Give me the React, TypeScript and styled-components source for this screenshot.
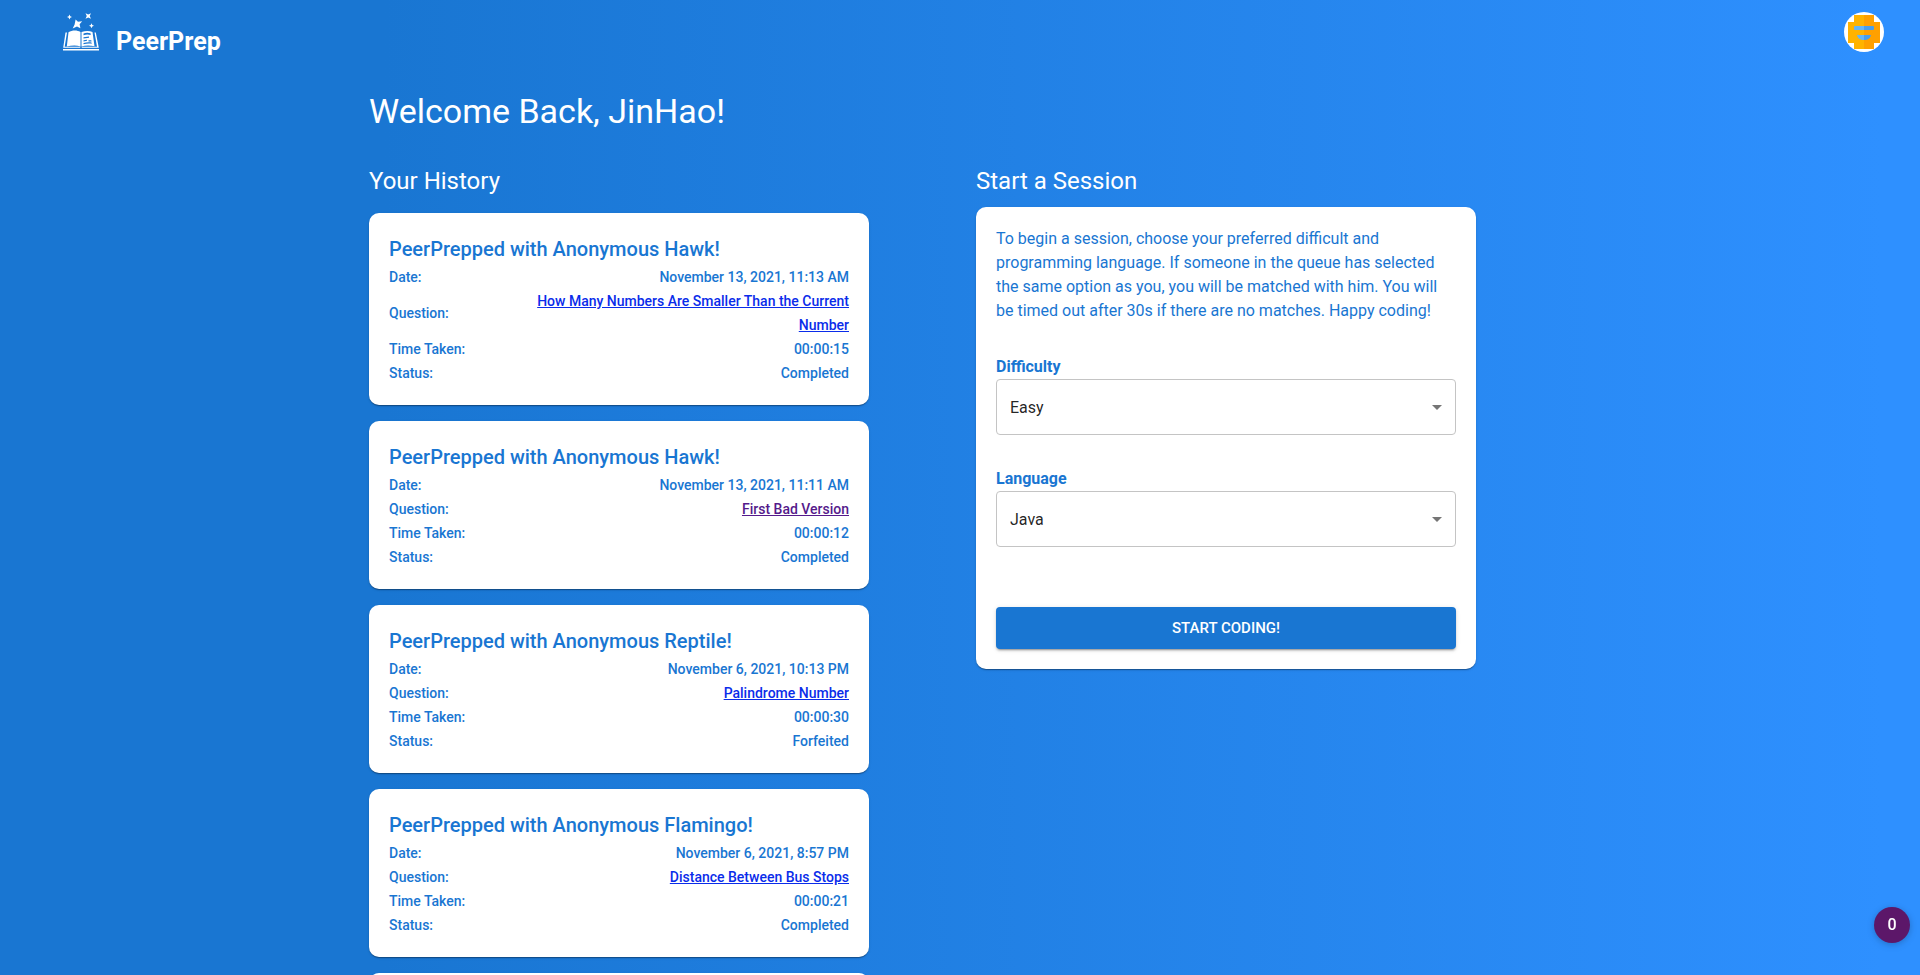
import React from 'react';
import styled, { createGlobalStyle } from 'styled-components';

const BLUE = '#1976d2';
const CARD_SHADOW =
  '0 2px 1px -1px rgba(0,0,0,0.2), 0 1px 1px 0 rgba(0,0,0,0.14), 0 1px 3px 0 rgba(0,0,0,0.12)';

const GlobalStyle = createGlobalStyle`
  *, *::before, *::after { box-sizing: border-box; }
  html { height: 100%; overflow: hidden; }
  body {
    margin: 0;
    height: 100%;
    overflow: hidden;
    font-family: Roboto, "Liberation Sans", sans-serif;
    font-size: 16px;
    line-height: 24px;
    color: ${BLUE};
    background: linear-gradient(90deg, #1976d2 20%, #2e90ff 98%) fixed;
  }
  h1, h2, h3, p, dl, dd, ul { margin: 0; padding: 0; }
  #root { height: 100%; }
`;

const Page = styled.div`
  height: 100%;
  overflow: hidden;
`;

const Header = styled.header`
  display: flex;
  align-items: center;
  justify-content: space-between;
  height: 64px;
  padding: 0 36px 0 60px;
`;

const Brand = styled.a`
  display: flex;
  align-items: center;
  gap: 14px;
  color: #fff;
  font-size: 25px;
  line-height: 32px;
  font-weight: 700;
  text-decoration: none;
`;

const BrandName = styled.span`
  padding-top: 20px;
`;

const AvatarButton = styled.button`
  width: 40px;
  height: 40px;
  padding: 0;
  border: 0;
  border-radius: 50%;
  overflow: hidden;
  background: #fff;
  cursor: pointer;
  svg { display: block; }
`;

const Main = styled.main`
  max-width: 1246px;
  margin: 0 auto;
  padding: 27px 0 0 32px;
`;

const Welcome = styled.h1`
  color: #fff;
  font-size: 34px;
  line-height: 40px;
  font-weight: 400;
`;

const Columns = styled.div`
  display: grid;
  grid-template-columns: 1fr 1fr;
  align-items: start;
  margin-top: 34px;
`;

const Column = styled.section<{ $gap: number }>`
  display: flex;
  flex-direction: column;
  gap: ${({ $gap }) => $gap}px;
  max-width: 500px;
`;

const SectionTitle = styled.h2`
  color: #fff;
  font-size: 24px;
  line-height: 32px;
  font-weight: 400;
`;

const HistoryList = styled.ul`
  display: flex;
  flex-direction: column;
  gap: 16px;
  list-style: none;
`;

const cardBase = `
  padding: 20px;
  border-radius: 10px;
  background: #fff;
  box-shadow: ${CARD_SHADOW};
`;

const HistoryCard = styled.li`
  ${cardBase}
`;

const CardTitle = styled.h3`
  font-size: 20px;
  line-height: 32px;
  font-weight: 500;
`;

const Details = styled.dl`
  font-size: 14px;
  font-weight: 500;
`;

const DetailRow = styled.div`
  display: flex;
  align-items: center;
  justify-content: space-between;
`;

const DetailValue = styled.dd`
  max-width: 320px;
  text-align: right;
`;

const QuestionLink = styled.a<{ $visited?: boolean }>`
  color: ${({ $visited }) => ($visited ? '#551a8b' : '#0a2cea')};
`;

const SessionForm = styled.form`
  ${cardBase}
  display: flex;
  flex-direction: column;
  gap: 32px;
`;

const Field = styled.div`
  display: flex;
  flex-direction: column;
`;

const FieldLabel = styled.label`
  font-weight: 700;
`;

const SelectBox = styled.div`
  display: grid;
  align-items: center;
  > * { grid-area: 1 / 1; }
  svg {
    justify-self: end;
    margin-right: 7px;
    pointer-events: none;
  }
`;

const Select = styled.select`
  appearance: none;
  width: 100%;
  height: 56px;
  padding: 2px 32px 0 13px;
  border: 1px solid #c4c4c4;
  border-radius: 4px;
  background: #fff;
  color: rgba(0, 0, 0, 0.87);
  font: inherit;
`;

const StartButton = styled.button`
  margin-top: 28px;
  padding: 8px 22px;
  border: 0;
  border-radius: 4px;
  background: ${BLUE};
  color: #fff;
  font: inherit;
  font-size: 15px;
  line-height: 26px;
  font-weight: 500;
  text-transform: uppercase;
  cursor: pointer;
  box-shadow: 0 3px 1px -2px rgba(0,0,0,0.2), 0 2px 2px 0 rgba(0,0,0,0.14), 0 1px 5px 0 rgba(0,0,0,0.12);
`;

const CounterButton = styled.button`
  position: fixed;
  right: 10px;
  bottom: 32px;
  width: 36px;
  height: 36px;
  padding: 0;
  border: 0;
  border-radius: 50%;
  background: #5c1769;
  color: #fff;
  font: inherit;
  font-weight: 500;
  cursor: pointer;
  box-shadow: 0 1px 6px rgba(0,0,0,0.12), 0 2px 8px rgba(0,0,0,0.12);
`;

const BookLogo = () => (
  <svg width="42" height="42" viewBox="0 0 42 42" fill="#fff" aria-hidden="true">
    <path d="M15.600 8.500 18 10.800 22.200 10.200 19.600 13.300 20.400 17.200 17 15.600 12.700 17.600 14.600 13.600 Z" />
    <path d="M9.500 3.500 10.300 5.200 12 6 10.300 6.800 9.500 8.500 8.700 6.800 7 6 8.700 5.200Z" />
    <path d="M31.500 12.300 32.300 14 34 14.800 32.300 15.600 31.500 17.300 30.700 15.600 29 14.800 30.700 14Z" />
    <path d="M25.500 2.200 28.200 3.600 31 2.200 29.700 5 31 7.800 28.200 6.500 25.500 7.800 26.800 5Z" />
    <path d="M8.500 21.300C12 19 17 18.800 20.500 21V35.500C16.500 34 11.500 34.300 6.800 35.500Z" />
    <path
      d="M21.500 21C25.500 19.500 29.500 19.500 32.500 21L34.500 35.300C30 34.200 25.500 34.200 21.500 35.500ZM23.500 22.500V24.200C26 23.300 28.500 23.300 30.700 24L30.500 22.300C28.300 21.500 25.500 21.600 23.500 22.500ZM23.500 26.200V27.400L29 26.800V25.600ZM23.500 29.200V30.400L27 29.800V28.800ZM28.500 29.200V30.600H31.500L31.300 29.200ZM23.500 32V33.200C26 32.500 29 32.300 31.700 32.700L31.500 31.500C29 31.100 26 31.300 23.500 32Z"
      fillRule="evenodd"
    />
    <path d="M5.500 21.500H7L4.700 35.800H20.300V36.800H3.200Z" />
    <path d="M34.500 21.500H35.800L38.800 36.800H21.700V35.800H37Z" />
    <path d="M3 38H39V39.600H3Z" />
  </svg>
);

const BotAvatar = () => (
  <svg width="40" height="40" viewBox="0 0 40 40" aria-hidden="true">
    <path fill="#ffb300" d="M10 3H20V37H10V31H4V10H10Z" />
    <path fill="#ffa000" d="M20 3H30V10H36V31H30V37H20Z" />
    <path fill="#64b5f6" d="M11 14H20V18H11A1 1 0 0 1 10 17V15A1 1 0 0 1 11 14Z" />
    <path fill="#4a9eea" d="M20 14H29A1 1 0 0 1 30 15V17A1 1 0 0 1 29 18H20Z" />
    <path fill="#64b5f6" d="M13 23H20V28C16 28 13.500 26 13 23Z" />
    <path fill="#4a9eea" d="M20 23H27C26.500 26 24 28 20 28Z" />
  </svg>
);

interface Session {
  partner: string;
  date: string;
  question: string;
  visited?: boolean;
  time: string;
  status: string;
}

const sessions: Session[] = [
  { partner: 'Hawk', date: 'November 13, 2021, 11:13 AM', question: 'How Many Numbers Are Smaller Than the Current Number', time: '00:00:15', status: 'Completed' },
  { partner: 'Hawk', date: 'November 13, 2021, 11:11 AM', question: 'First Bad Version', visited: true, time: '00:00:12', status: 'Completed' },
  { partner: 'Reptile', date: 'November 6, 2021, 10:13 PM', question: 'Palindrome Number', time: '00:00:30', status: 'Forfeited' },
  { partner: 'Flamingo', date: 'November 6, 2021, 8:57 PM', question: 'Distance Between Bus Stops', time: '00:00:21', status: 'Completed' },
];

const HistoryItem = ({ session }: { session: Session }) => (
  <HistoryCard>
    <CardTitle>PeerPrepped with Anonymous {session.partner}!</CardTitle>
    <Details>
      <DetailRow><dt>Date:</dt><DetailValue>{session.date}</DetailValue></DetailRow>
      <DetailRow>
        <dt>Question:</dt>
        <DetailValue><QuestionLink href="#question" $visited={session.visited}>{session.question}</QuestionLink></DetailValue>
      </DetailRow>
      <DetailRow><dt>Time Taken:</dt><DetailValue>{session.time}</DetailValue></DetailRow>
      <DetailRow><dt>Status:</dt><DetailValue>{session.status}</DetailValue></DetailRow>
    </Details>
  </HistoryCard>
);

const SelectField = ({ id, label, options }: { id: string; label: string; options: string[] }) => (
  <Field>
    <FieldLabel htmlFor={id}>{label}</FieldLabel>
    <SelectBox>
      <Select id={id} defaultValue={options[0]}>
        {options.map((o) => <option key={o}>{o}</option>)}
      </Select>
      <svg width="24" height="24" viewBox="0 0 24 24" fill="#757575" aria-hidden="true"><path d="M7 10l5 5 5-5z" /></svg>
    </SelectBox>
  </Field>
);

export default function App() {
  return (
    <Page>
      <GlobalStyle />
      <Header>
        <Brand href="#home"><BookLogo /><BrandName>PeerPrep</BrandName></Brand>
        <AvatarButton type="button" aria-label="Account"><BotAvatar /></AvatarButton>
      </Header>
      <Main>
        <Welcome>Welcome Back, JinHao!</Welcome>
        <Columns>
          <Column $gap={16}>
            <SectionTitle>Your History</SectionTitle>
            <HistoryList>
              {sessions.map((s) => <HistoryItem key={s.date} session={s} />)}
              <HistoryCard />
            </HistoryList>
          </Column>
          <Column $gap={10}>
            <SectionTitle>Start a Session</SectionTitle>
            <SessionForm>
              <p>
                To begin a session, choose your preferred difficult and programming language. If someone in the
                queue has selected the same option as you, you will be matched with him. You will be timed out
                after 30s if there are no matches. Happy coding!
              </p>
              <SelectField id="difficulty" label="Difficulty" options={['Easy', 'Medium', 'Hard']} />
              <SelectField id="language" label="Language" options={['Java', 'Python', 'JavaScript']} />
              <StartButton type="button">Start Coding!</StartButton>
            </SessionForm>
          </Column>
        </Columns>
      </Main>
      <CounterButton type="button">0</CounterButton>
    </Page>
  );
}
